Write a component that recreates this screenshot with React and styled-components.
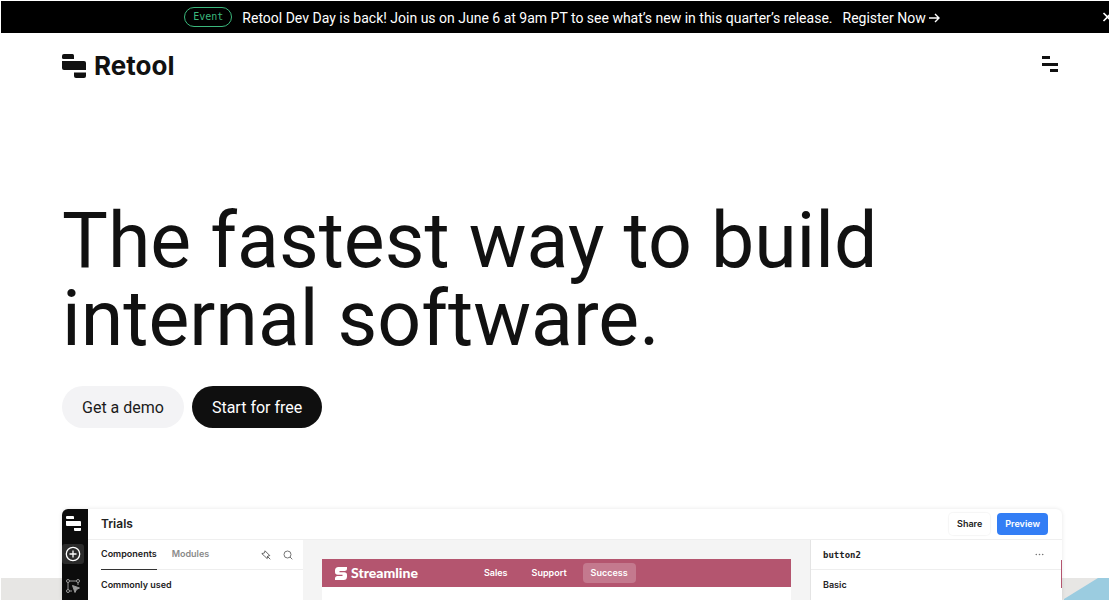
import React from 'react';
import styled, { createGlobalStyle } from 'styled-components';

const GlobalStyle = createGlobalStyle`
  *, *::before, *::after { box-sizing: border-box; }
  body { margin: 0; background: #fff; color: #111; font-family: Roboto, "Liberation Sans", sans-serif; }
  button { font: inherit; color: inherit; border: 0; padding: 0; background: none; cursor: pointer; }
  a { color: inherit; text-decoration: none; }
  h1, h2, h3, p { margin: 0; }
  svg { display: block; flex: none; }
`;

const Page = styled.div`
  display: flex;
  flex-direction: column;
  min-height: 100vh;
  padding: 1px 0 0 1px;
  overflow: hidden;
`;

const Banner = styled.aside`
  position: relative;
  display: flex;
  align-items: center;
  justify-content: center;
  gap: 10px;
  height: 32px;
  padding-left: 14px;
  background: #000;
  color: #fff;
  font-size: 14px;
  line-height: 20px;
  white-space: nowrap;
`;

const BannerText = styled.p`
  padding-top: 2px;
`;

const EventTag = styled.span`
  display: flex;
  align-items: center;
  height: 20px;
  padding: 0 8px;
  border: 1px solid #3bb87d;
  border-radius: 10px;
  color: #3bb87d;
  font-family: "DejaVu Sans Mono", monospace;
  font-size: 10px;
`;

const BannerLink = styled.a`
  display: flex;
  align-items: center;
  gap: 3px;
  padding-top: 2px;
`;

const CloseButton = styled.button`
  position: absolute;
  top: 10px;
  right: -5px;
`;

const Header = styled.header`
  display: flex;
  align-items: center;
  justify-content: space-between;
  height: 66px;
  padding: 0 50px 0 61px;
`;

const Brand = styled.a`
  display: flex;
  align-items: center;
  gap: 7px;
  font-family: Inter, sans-serif;
  font-size: 26px;
  font-weight: 700;
  line-height: 32px;
`;

const Hero = styled.section`
  display: flex;
  flex-direction: column;
  gap: 28px;
  padding: 103px 61px 81px;
`;

const Title = styled.h1`
  max-width: 900px;
  font-size: 77px;
  font-weight: 400;
  line-height: 78px;
`;

const Actions = styled.div`
  display: flex;
  gap: 8px;
`;

const PillButton = styled.button`
  height: 42px;
  padding: 0 20px;
  border-radius: 21px;
  background: ${({ $dark }) => ($dark ? '#0f0f0f' : '#f3f3f5')};
  color: ${({ $dark }) => ($dark ? '#fff' : '#1b1b1b')};
  font-size: 16px;
`;

const Showcase = styled.section`
  position: relative;
  display: flex;
  flex: 1;
  min-height: 90px;
  padding: 0 47px 0 61px;
`;

const Backdrop = styled.div`
  position: absolute;
  inset: 69px 0 0;
  display: flex;
  background: #e7e6e4;
  svg { margin-left: auto; }
`;

const AppWindow = styled.div`
  position: relative;
  display: flex;
  flex: 1;
  border-radius: 6px 6px 0 0;
  background: #fff;
  box-shadow: 0 0 4px rgba(0, 0, 0, 0.1);
  font-family: Inter, sans-serif;
  font-size: 9px;
  font-weight: 600;
  line-height: 14px;
  color: #222;
  overflow: hidden;
`;

const Rail = styled.nav`
  display: flex;
  flex-direction: column;
  align-items: center;
  width: 26px;
  padding: 7px 4px 0 0;
  gap: 12px;
  background: #0c0c0c;
`;

const RailButton = styled.button`
  display: flex;
  align-items: center;
  justify-content: center;
  width: 22px;
  height: 20px;
  border-radius: 3px;
  background: ${({ $active }) => ($active ? '#2b2b2b' : 'none')};
`;

const Workspace = styled.div`
  display: flex;
  flex: 1;
  flex-direction: column;
`;

const TopBar = styled.div`
  display: flex;
  align-items: center;
  gap: 7px;
  height: 31px;
  padding: 0 14px 0 13px;
  border-bottom: 1px solid #efefef;
`;

const AppName = styled.h2`
  margin-right: auto;
  font-size: 12px;
  font-weight: 600;
  line-height: 16px;
`;

const SmallButton = styled.button`
  height: 22px;
  padding: 0 8px;
  border-radius: 4px;
  background: ${({ $primary }) => ($primary ? '#337ef5' : '#fff')};
  color: ${({ $primary }) => ($primary ? '#fff' : '#222')};
  box-shadow: ${({ $primary }) => ($primary ? 'none' : '0 0 1px 1px rgba(0, 0, 0, 0.04)')};
`;

const Panels = styled.div`
  display: flex;
  flex: 1;
`;

const Panel = styled.section`
  width: ${({ $width }) => $width}px;
  background: #fff;
  border-left: ${({ $divided }) => ($divided ? '1px solid #e4e4e4' : '0')};
`;

const PanelHead = styled.div`
  display: flex;
  align-items: center;
  height: 30px;
  padding-right: ${({ $end }) => $end}px;
  margin-left: ${({ $start }) => $start}px;
  gap: 15px;
  border-bottom: 1px solid #eee;
`;

const Tab = styled.button`
  height: 30px;
  border-bottom: 1px solid ${({ $active }) => ($active ? '#333' : 'transparent')};
  color: ${({ $active }) => ($active ? '#222' : '#8a8a8a')};
`;

const Tools = styled.div`
  display: flex;
  gap: 12px;
  margin-left: auto;
`;

const ComponentName = styled.h3`
  margin-right: auto;
  padding-left: 12px;
  font-family: "DejaVu Sans Mono", monospace;
  font-size: 9px;
  font-weight: 700;
  line-height: 14px;
`;

const PanelLabel = styled.h3`
  padding: 8px 12px 0 ${({ $start }) => $start}px;
  font-size: inherit;
  font-weight: 600;
`;

const Canvas = styled.div`
  flex: 1;
  display: flex;
  padding: 19px 19px 0;
  background: #f4f4f4;
`;

const Artboard = styled.div`
  flex: 1;
  background: #fff;
`;

const AppNav = styled.nav`
  display: flex;
  align-items: center;
  gap: 8px;
  height: 28px;
  padding: 0 13px;
  background: #b4556f;
  color: #fff;
`;

const StreamlineBrand = styled.span`
  display: flex;
  align-items: center;
  gap: 4px;
  margin-right: 50px;
  font-family: Lato, sans-serif;
  font-size: 14px;
  font-weight: 900;
`;

const NavItem = styled.a`
  padding: 3px 8px;
  border-radius: 4px;
  background: ${({ $active }) => ($active ? '#c4798e' : 'none')};
`;

const Edge = styled.span`
  position: absolute;
  top: 51px;
  right: 0;
  width: 1px;
  height: 28px;
  background: #b4556f;
`;

function RetoolMark({ width, height }) {
  return (
    <svg width={width} height={height} viewBox="0 0 25 24" fill="currentColor" aria-hidden="true">
      <path d="M2 0h8.500a1.500 1.500 0 0 1 1.500 1.500V5H1.500A1.500 1.500 0 0 1 0 3.500V2a2 2 0 0 1 2-2z" />
      <path d="M0 7h22a2 2 0 0 1 2 2v7H2a2 2 0 0 1-2-2z" />
      <path d="M12 18.500h12V22a2 2 0 0 1-2 2h-8a2 2 0 0 1-2-2z" />
    </svg>
  );
}

export default function App() {
  return (
    <>
      <GlobalStyle />
      <Page>
        <Banner>
          <EventTag>Event</EventTag>
          <BannerText>
            Retool Dev Day is back! Join us on June 6 at 9am PT to see what’s new in this quarter’s release.
          </BannerText>
          <BannerLink href="#register">
            Register Now
            <svg width="11" height="10" viewBox="0 0 11 10" fill="none" stroke="#fff" strokeWidth="1.400" aria-hidden="true">
              <path d="M0 5h10M6 1l4 4-4 4" />
            </svg>
          </BannerLink>
          <CloseButton aria-label="Close banner">
            <svg width="12" height="12" viewBox="0 0 12 12" fill="none" stroke="#fff" strokeWidth="1.600">
              <path d="M1.500 2l8 8M9.500 2l-8 8" />
            </svg>
          </CloseButton>
        </Banner>

        <Header>
          <Brand href="#home">
            <RetoolMark width={25} height={24} />
            Retool
          </Brand>
          <button aria-label="Open menu">
            <svg width="17" height="20" viewBox="0 0 17 20" fill="#111">
              <path d="M0 0h8v3H0zM0 7h16v3H0zM8 13h8v3H8z" />
            </svg>
          </button>
        </Header>

        <Hero>
          <Title>The fastest way to build internal software.</Title>
          <Actions>
            <PillButton>Get a demo</PillButton>
            <PillButton $dark>Start for free</PillButton>
          </Actions>
        </Hero>

        <Showcase>
          <Backdrop>
            <svg width="45" height="22" viewBox="0 0 45 22" aria-hidden="true">
              <path d="M0 21L34 0h11v22H0z" fill="#9bcce0" />
            </svg>
          </Backdrop>
          <AppWindow>
            <Rail>
              <svg width="16" height="16" viewBox="0 0 16 16" fill="#fff" aria-hidden="true">
                <path d="M2 0h6a1 1 0 0 1 1 1v2H2a1 1 0 0 1-1-1V1a1 1 0 0 1 1-1zM1 5h14a1 1 0 0 1 1 1v4H2a1 1 0 0 1-1-1zM9 12h7v2a1 1 0 0 1-1 1h-5a1 1 0 0 1-1-1z" />
              </svg>
              <RailButton $active aria-label="Add component">
                <svg width="16" height="16" viewBox="0 0 16 16" fill="none" stroke="#fff" strokeWidth="1.300">
                  <circle cx="8" cy="8" r="6.700" />
                  <path d="M8 4.500v7M4.500 8h7" />
                </svg>
              </RailButton>
              <RailButton aria-label="Component tree">
                <svg width="16" height="16" viewBox="0 0 16 16" fill="none" stroke="#999" strokeWidth="1">
                  <circle cx="3" cy="3" r="1.500" />
                  <circle cx="13" cy="3" r="1.500" />
                  <circle cx="3" cy="13" r="1.500" />
                  <path d="M4.500 3h7M3 4.500v7M13 4.500V7M4.500 13H7" />
                  <path d="M7.500 7.500l7 2.500-3 1.500-1.500 3z" fill="#999" />
                </svg>
              </RailButton>
            </Rail>
            <Workspace>
              <TopBar>
                <AppName>Trials</AppName>
                <SmallButton>Share</SmallButton>
                <SmallButton $primary>Preview</SmallButton>
              </TopBar>
              <Panels>
                <Panel $width={215}>
                  <PanelHead $start={13} $end={10}>
                    <Tab $active>Components</Tab>
                    <Tab>Modules</Tab>
                    <Tools>
                      <button aria-label="Pin panel">
                        <svg width="10" height="10" viewBox="0 0 10 10" fill="none" stroke="#555" strokeWidth="0.900">
                          <path d="M4 .8l4.800 4.800-2 .4-.6 2.600L3.600 6.200.8 3.600l2.700-.7zM6.300 6.300l3 3" />
                        </svg>
                      </button>
                      <button aria-label="Search components">
                        <svg width="10" height="10" viewBox="0 0 10 10" fill="none" stroke="#666" strokeWidth="0.900">
                          <circle cx="4.500" cy="4.500" r="3.500" />
                          <path d="M7 7l2.300 2.300" />
                        </svg>
                      </button>
                    </Tools>
                  </PanelHead>
                  <PanelLabel $start={13}>Commonly used</PanelLabel>
                </Panel>
                <Canvas>
                  <Artboard>
                    <AppNav>
                      <StreamlineBrand>
                        <svg width="12" height="13" viewBox="0 0 12 13" fill="#fff" aria-hidden="true">
                          <path d="M3.500 0H12v1.500A2.500 2.500 0 0 1 9.500 4H4.500v1.200h4.700A2.800 2.800 0 0 1 12 8v1.500A3.500 3.500 0 0 1 8.500 13H0v-1.500A2.500 2.500 0 0 1 2.500 9h5V7.800H2.800A2.800 2.800 0 0 1 0 5V3.500A3.500 3.500 0 0 1 3.500 0z" />
                        </svg>
                        Streamline
                      </StreamlineBrand>
                      <NavItem href="#sales">Sales</NavItem>
                      <NavItem href="#support">Support</NavItem>
                      <NavItem href="#success" $active>Success</NavItem>
                    </AppNav>
                  </Artboard>
                </Canvas>
                <Panel $width={252} $divided>
                  <PanelHead $start={0} $end={18}>
                    <ComponentName>button2</ComponentName>
                    <button aria-label="More options">
                      <svg width="9" height="3" viewBox="0 0 9 3" fill="#777">
                        <circle cx="1.300" cy="1.500" r="0.800" />
                        <circle cx="4.500" cy="1.500" r="0.800" />
                        <circle cx="7.700" cy="1.500" r="0.800" />
                      </svg>
                    </button>
                  </PanelHead>
                  <PanelLabel $start={12}>Basic</PanelLabel>
                </Panel>
              </Panels>
            </Workspace>
            <Edge />
          </AppWindow>
        </Showcase>
      </Page>
    </>
  );
}
